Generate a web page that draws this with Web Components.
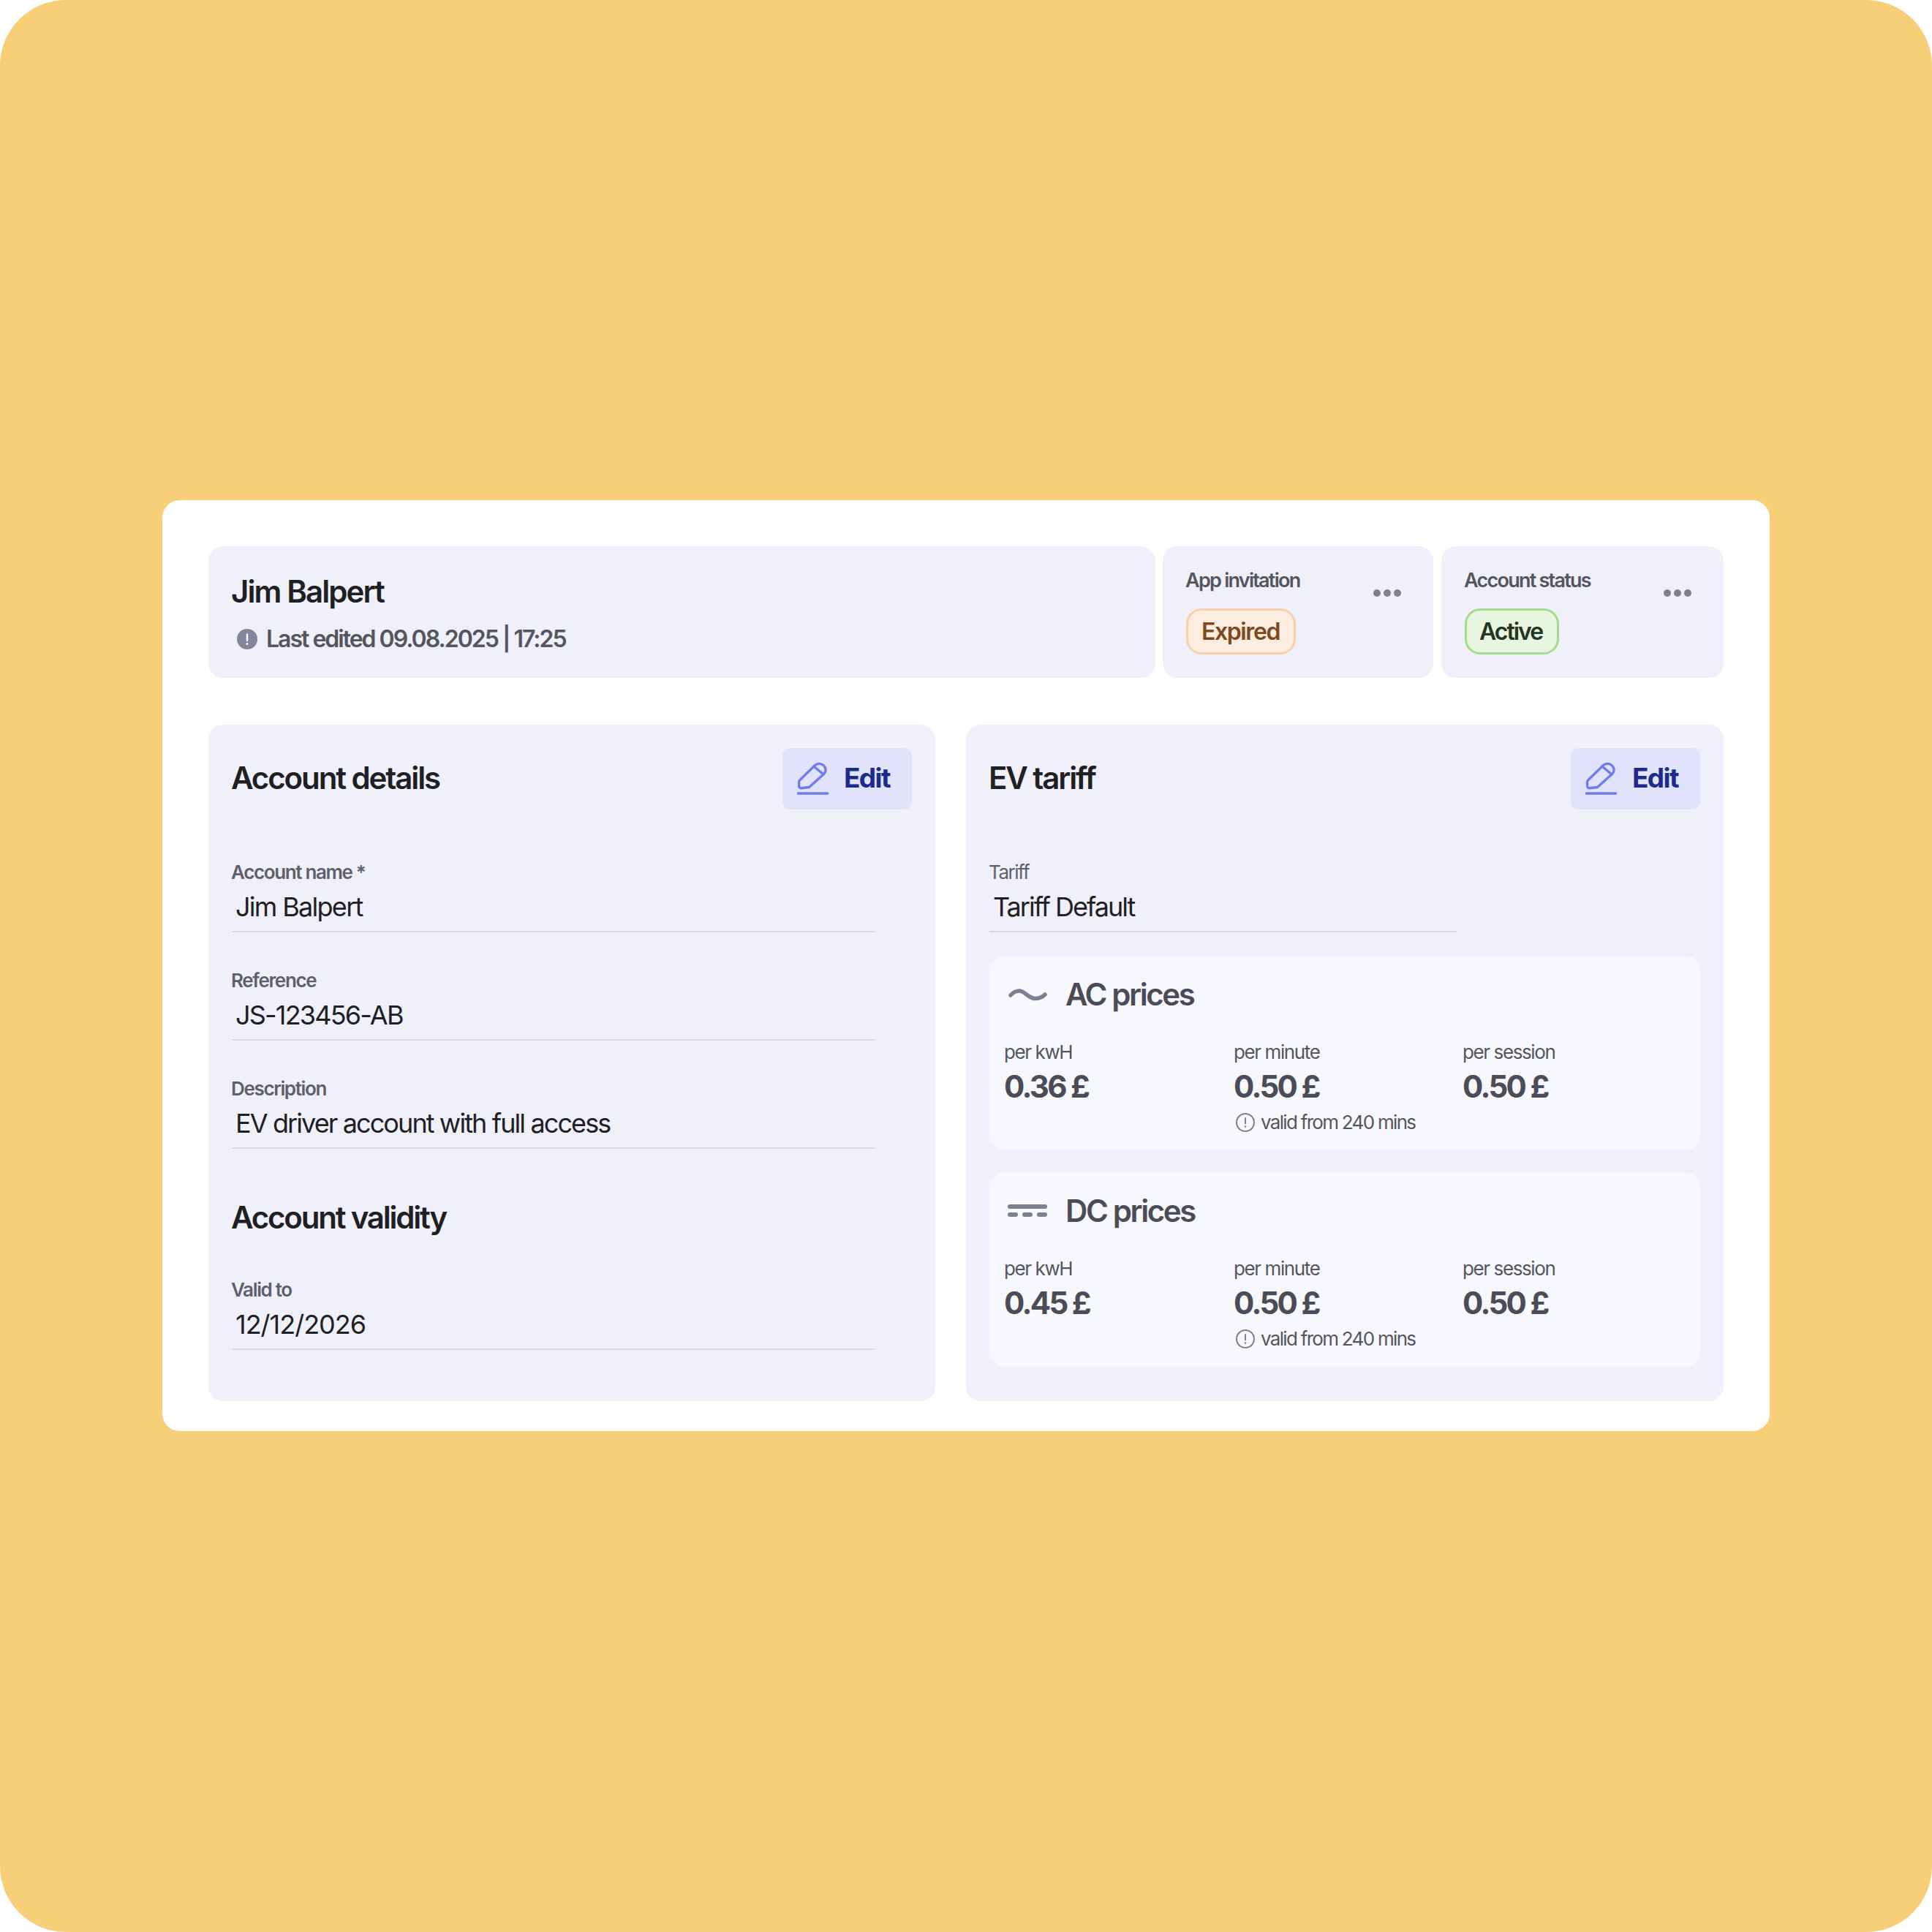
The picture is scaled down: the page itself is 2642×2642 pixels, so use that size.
<!DOCTYPE html>
<html lang="en">
<head>
<meta charset="utf-8">
<title>Account</title>
<style>
  html, body { margin: 0; padding: 0; background: #fff; }
  body { font-family: Inter, "Noto Sans", sans-serif; }
</style>
</head>
<body>
<account-page>
  <name-card name="Jim Balpert" edited="Last edited 09.08.2025 | 17:25" style="grid-area: name"></name-card>
  <status-card label="App invitation" value="Expired" tone="orange" style="grid-area: app"></status-card>
  <status-card label="Account status" value="Active" tone="green" style="grid-area: acct"></status-card>

  <panel-card heading="Account details" style="grid-area: left">
    <text-field label="Account name *" value="Jim Balpert" strong spacing="-1.7"></text-field>
    <text-field label="Reference" value="JS-123456-AB" strong spacing="-1.8"></text-field>
    <text-field label="Description" value="EV driver account with full access" strong spacing="-1.9"></text-field>
    <sub-heading>Account validity</sub-heading>
    <text-field label="Valid to" value="12/12/2026" strong spacing="-1"></text-field>
  </panel-card>

  <panel-card heading="EV tariff" style="grid-area: right">
    <text-field label="Tariff" value="Tariff Default" short spacing="-2"></text-field>
    <price-box title="AC prices" kind="ac" kwh="0.36 £" min="0.50 £" session="0.50 £"></price-box>
    <price-box title="DC prices" kind="dc" kwh="0.45 £" min="0.50 £" session="0.50 £"></price-box>
  </panel-card>
</account-page>

<script>
// --- shared bits ---
const PENCIL = `
  <svg width="44" height="46" viewBox="0 0 44 46" fill="none" stroke="#6f7ceb" stroke-width="3.400" stroke-linecap="round" stroke-linejoin="round">
    <path d="M3.500 25 L24 5 C27.500 1.500 33 1.500 36.500 5 C40 8.500 40 13 36.800 16.200 L16.500 34.500 L6 35.800 C4 36 2.600 34.600 2.600 32.600 L2.600 27.500 C2.600 26.500 3 25.500 3.500 25 Z"/>
    <path d="M23 6 L36 17"/>
    <path d="M1.500 43 H41.500" stroke-width="3.600"/>
  </svg>`;

const DOTS = `
  <svg width="38" height="10" viewBox="0 0 38 10" fill="#7f7f90">
    <circle cx="5" cy="5" r="5"/><circle cx="19" cy="5" r="5"/><circle cx="33" cy="5" r="5"/>
  </svg>`;

const ICONS = {
  ac: `<svg width="54" height="20" viewBox="0 0 54 20" fill="none" stroke="#7f7f92" stroke-width="5.500" stroke-linecap="round">
         <path d="M4 11 C8 6.500 12 5 16 5 C23 5 29 16 38 15.500 C43 15.300 48 13 51 10"/></svg>`,
  dc: `<svg width="54" height="20" viewBox="0 0 54 20" fill="none" stroke="#7f7f92" stroke-width="6" stroke-linecap="round">
         <path d="M3 4 H51"/><path d="M3 15 H11 M23 15 H31 M43 15 H51"/></svg>`
};

// page frame: yellow rounded square holding the white card
class AccountPage extends HTMLElement {
  constructor() {
    super();
    this.attachShadow({ mode: 'open' }).innerHTML = `
      <style>
        :host { display: flex; box-sizing: border-box; width: 2642px; height: 2642px; padding-bottom: 1px; background: #f7cf78; border-radius: 90px;
                align-items: center; justify-content: center; }
        .card { width: 2198px; height: 1273px; box-sizing: border-box; padding: 63px; background: #fff; border-radius: 24px;
                display: grid; align-content: start;
                grid-template-columns: 994px 42px 259px 10px 370px 11px 386px;
                grid-template-rows: 180px 64px 925px;
                grid-template-areas:
                  "name name name . app . acct"
                  ". . . . . . ."
                  "left . right right right right right"; }
      </style>
      <div class="card"><slot></slot></div>`;
  }
}
customElements.define('account-page', AccountPage);

class NameCard extends HTMLElement {
  connectedCallback() {
    this.attachShadow({ mode: 'open' }).innerHTML = `
      <style>
        :host { display: block; background: #eff0f9; border-radius: 20px; padding: 37px 32px 0; box-sizing: border-box; }
        .name { margin-left: -1px; font: 600 42px/50px Inter, sans-serif; letter-spacing: -1.9px; color: #1f2024; }
        .edit { display: flex; align-items: center; gap: 12px; margin: 20px 0 0 7px;
                font: 600 32px/40px Inter, sans-serif; letter-spacing: -2px; color: #55555f; }
        svg { flex: none; }
      </style>
      <div class="name">${this.getAttribute('name')}</div>
      <div class="edit">
        <svg width="28" height="28" viewBox="0 0 28 28"><circle cx="14" cy="14" r="14" fill="#84849a"/>
          <path d="M14 7.500 V16" stroke="#fff" stroke-width="2.400" stroke-linecap="round"/><circle cx="14" cy="20.500" r="1.500" fill="#fff"/></svg>
        <span>${this.getAttribute('edited')}</span>
      </div>`;
  }
}
customElements.define('name-card', NameCard);

class StatusCard extends HTMLElement {
  connectedCallback() {
    const tones = {
      orange: 'background:#fcede0;border-color:#f6d0aa;color:#7c4a1e;letter-spacing:-1.4px;padding:0 19px 0 18px',
      green: 'background:#e8f5e1;border-color:#a3dc8f;color:#24361e;letter-spacing:-2px;padding:0 20px 0 17px'
    };
    this.attachShadow({ mode: 'open' }).innerHTML = `
      <style>
        :host { display: block; position: relative; background: #eff0f9; border-radius: 20px; padding: 32px 44px 0 32px; box-sizing: border-box; }
        .top { display: flex; justify-content: space-between; align-items: flex-start; height: 53px; }
        .label { margin-left: -1px; font: 600 27px/30px Inter, sans-serif; letter-spacing: -1.75px; color: #55555f; }
        svg { margin-top: 27px; }
        .pill { display: inline-block; box-sizing: border-box; height: 63px; border: 3px solid; border-radius: 21px;
                font: 600 32px/57px Inter, sans-serif; }
      </style>
      <div class="top"><span class="label">${this.getAttribute('label')}</span>${DOTS}</div>
      <span class="pill" style="${tones[this.getAttribute('tone')]}">${this.getAttribute('value')}</span>`;
  }
}
customElements.define('status-card', StatusCard);

class EditButton extends HTMLElement {
  constructor() {
    super();
    this.attachShadow({ mode: 'open' }).innerHTML = `
      <style>
        :host { display: flex; align-items: center; gap: 20px; box-sizing: border-box; width: 177px; height: 84px;
                padding-left: 20px; background: #e0e3fa; border-radius: 10px;
                font: 700 37px/44px Inter, sans-serif; letter-spacing: -1.6px; color: #1e2a8c; }
        svg { flex: none; }
        span { margin-top: -3px; }
      </style>
      ${PENCIL}<span>Edit</span>`;
  }
}
customElements.define('edit-button', EditButton);

class PanelCard extends HTMLElement {
  connectedCallback() {
    this.attachShadow({ mode: 'open' }).innerHTML = `
      <style>
        :host { display: block; background: #eff0f9; border-radius: 20px; padding: 32px; box-sizing: border-box; }
        header { display: flex; justify-content: space-between; align-items: center; height: 84px; margin-bottom: 71px; }
        h2 { margin: -3px 0 0 -1px; font: 600 42px/50px Inter, sans-serif; letter-spacing: -2.1px; color: #1f2024; }
      </style>
      <header><h2>${this.getAttribute('heading')}</h2><edit-button></edit-button></header>
      <slot></slot>`;
  }
}
customElements.define('panel-card', PanelCard);

class SubHeading extends HTMLElement {
  constructor() {
    super();
    this.attachShadow({ mode: 'open' }).innerHTML = `
      <style>
        :host { display: block; margin: 69px 0 59px -1px; font: 600 42px/50px Inter, sans-serif; letter-spacing: -2.2px; color: #1f2024; }
      </style><slot></slot>`;
  }
}
customElements.define('sub-heading', SubHeading);

class TextField extends HTMLElement {
  connectedCallback() {
    const strong = this.hasAttribute('strong');
    this.attachShadow({ mode: 'open' }).innerHTML = `
      <style>
        :host { display: block; width: ${this.hasAttribute('short') ? 639 : 879}px; }
        :host(:not(:last-child)) { margin-bottom: 51px; }
        :host([short]) { margin-bottom: 0 !important; }
        .label { margin-left: -1px; font: ${strong ? 600 : 400} 26px/30px Inter, sans-serif; letter-spacing: ${strong ? -1.35 : -1.5}px; color: #5e5e6c; }
        .value { margin-top: 10px; padding: 0 0 11px 5px; border-bottom: 2px solid #d8d9e8;
                 font: 400 36px/44px Inter, sans-serif; letter-spacing: ${this.getAttribute('spacing')}px; color: #1f2024; }
      </style>
      <div class="label">${this.getAttribute('label')}</div>
      <div class="value">${this.getAttribute('value')}</div>`;
  }
}
customElements.define('text-field', TextField);

class PriceBox extends HTMLElement {
  connectedCallback() {
    const cell = (label, value, note) => `
      <div>
        <div class="label">${label}</div>
        <div class="value">${value}</div>
        ${note ? `<div class="note">
          <svg width="26" height="26" viewBox="0 0 26 26" fill="none"><circle cx="13" cy="13" r="12" stroke="#7f7f90" stroke-width="2"/>
            <path d="M13 7 V14.500" stroke="#7f7f90" stroke-width="2" stroke-linecap="round"/><circle cx="13" cy="18.500" r="1.200" fill="#7f7f90"/></svg>
          <span>valid from 240 mins</span></div>` : ''}
      </div>`;
    this.attachShadow({ mode: 'open' }).innerHTML = `
      <style>
        :host { display: block; height: 264px; box-sizing: border-box; margin-top: 32px; padding: 28px 20px 0; background: #f7f8fd; border-radius: 20px; color: #4c4c58; }
        :host(:first-of-type) { margin-top: 33px; }
        .title { display: flex; align-items: center; gap: 25px; padding-left: 5px; height: 48px;
                 font: 600 42px/48px Inter, sans-serif; letter-spacing: -2.4px; }
        .cols { display: grid; grid-template-columns: 314px 313px 1fr; margin-top: 40px; }
        .label { font: 400 26px/30px Inter, sans-serif; letter-spacing: -1.4px; color: #55555f; }
        .value { margin-top: 10px; font: 700 42px/44px Inter, sans-serif; letter-spacing: -2.7px; }
        .note { display: flex; align-items: center; gap: 8px; height: 30px; margin-top: 12px; padding-left: 3px;
                font: 400 26px/30px Inter, sans-serif; letter-spacing: -1.7px; color: #55555f; }
        svg { flex: none; }
      </style>
      <div class="title">${ICONS[this.getAttribute('kind')]}<span>${this.getAttribute('title')}</span></div>
      <div class="cols">
        ${cell('per kwH', this.getAttribute('kwh'))}
        ${cell('per minute', this.getAttribute('min'), true)}
        ${cell('per session', this.getAttribute('session'))}
      </div>`;
  }
}
customElements.define('price-box', PriceBox);
</script>
</body>
</html>
